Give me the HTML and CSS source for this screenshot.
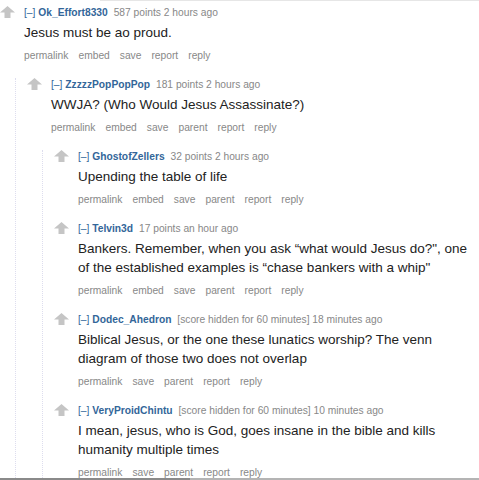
FILE: index.html
```html
<!DOCTYPE html>
<html>
<head>
<meta charset="utf-8">
<link rel="stylesheet" href="styles.css">
</head>
<body>
<div class="topline"></div>
<div class="page">
  <div class="comment">
    <div class="midcol"><svg class="arrow" viewBox="0 0 15 12"><path d="M7.5 0 L15 6.5 L10.5 6.5 L10.5 12 L4.5 12 L4.5 6.5 L0 6.5 Z"/></svg></div>
    <div class="entry">
      <p class="tagline"><a class="expand">[–]</a> <a class="author">Ok_Effort8330</a> <span class="score">587 points 2 hours ago</span></p>
      <p class="md">Jesus must be ao proud.</p>
      <ul class="buttons"><li>permalink</li><li>embed</li><li>save</li><li>report</li><li>reply</li></ul>
    </div>
  </div>
  <div class="child">
    <div class="comment">
      <div class="midcol"><svg class="arrow" viewBox="0 0 15 12"><path d="M7.5 0 L15 6.5 L10.5 6.5 L10.5 12 L4.5 12 L4.5 6.5 L0 6.5 Z"/></svg></div>
      <div class="entry">
        <p class="tagline"><a class="expand">[–]</a> <a class="author">ZzzzzPopPopPop</a> <span class="score">181 points 2 hours ago</span></p>
        <p class="md">WWJA? (Who Would Jesus Assassinate?)</p>
        <ul class="buttons"><li>permalink</li><li>embed</li><li>save</li><li>parent</li><li>report</li><li>reply</li></ul>
      </div>
    </div>
    <div class="child">
      <div class="comment">
        <div class="midcol"><svg class="arrow" viewBox="0 0 15 12"><path d="M7.5 0 L15 6.5 L10.5 6.5 L10.5 12 L4.5 12 L4.5 6.5 L0 6.5 Z"/></svg></div>
        <div class="entry">
          <p class="tagline"><a class="expand">[–]</a> <a class="author">GhostofZellers</a> <span class="score">32 points 2 hours ago</span></p>
          <p class="md">Upending the table of life</p>
          <ul class="buttons"><li>permalink</li><li>embed</li><li>save</li><li>parent</li><li>report</li><li>reply</li></ul>
        </div>
      </div>
      <div class="comment">
        <div class="midcol"><svg class="arrow" viewBox="0 0 15 12"><path d="M7.5 0 L15 6.5 L10.5 6.5 L10.5 12 L4.5 12 L4.5 6.5 L0 6.5 Z"/></svg></div>
        <div class="entry">
          <p class="tagline"><a class="expand">[–]</a> <a class="author">Telvin3d</a> <span class="score">17 points an hour ago</span></p>
          <p class="md">Bankers. Remember, when you ask “what would Jesus do?", one of the established examples is “chase bankers with a whip"</p>
          <ul class="buttons"><li>permalink</li><li>embed</li><li>save</li><li>parent</li><li>report</li><li>reply</li></ul>
        </div>
      </div>
      <div class="comment">
        <div class="midcol"><svg class="arrow" viewBox="0 0 15 12"><path d="M7.5 0 L15 6.5 L10.5 6.5 L10.5 12 L4.5 12 L4.5 6.5 L0 6.5 Z"/></svg></div>
        <div class="entry">
          <p class="tagline"><a class="expand">[–]</a> <a class="author">Dodec_Ahedron</a> <span class="score">[score hidden for 60 minutes] 18 minutes ago</span></p>
          <p class="md">Biblical Jesus, or the one these lunatics worship? The venn diagram of those two does not overlap</p>
          <ul class="buttons"><li>permalink</li><li>save</li><li>parent</li><li>report</li><li>reply</li></ul>
        </div>
      </div>
      <div class="comment">
        <div class="midcol"><svg class="arrow" viewBox="0 0 15 12"><path d="M7.5 0 L15 6.5 L10.5 6.5 L10.5 12 L4.5 12 L4.5 6.5 L0 6.5 Z"/></svg></div>
        <div class="entry">
          <p class="tagline"><a class="expand">[–]</a> <a class="author">VeryProidChintu</a> <span class="score">[score hidden for 60 minutes] 10 minutes ago</span></p>
          <p class="md">I mean, jesus, who is God, goes insane in the bible and kills humanity multiple times</p>
          <ul class="buttons"><li>permalink</li><li>save</li><li>parent</li><li>report</li><li>reply</li></ul>
        </div>
      </div>
    </div>
  </div>
</div>
<div class="scrollbar"><div class="thumb"></div></div>
</body>
</html>
```

FILE: styles.css
```css
html, body {
  margin: 0;
  padding: 0;
  background: #fff;
}
body {
  font-family: "Liberation Sans", Arial, sans-serif;
  width: 479px;
  height: 480px;
  overflow: hidden;
}
.topline {
  height: 1px;
  margin-left: 100px;
  background: #e6e6e6;
}
.page {
  padding: 5px 10px 0 0;
}
.comment {
  display: flex;
  align-items: flex-start;
  margin-bottom: 15px;
}
.midcol {
  width: 24px;
  flex: none;
}
.arrow {
  display: block;
  width: 15px;
  height: 12px;
  fill: #c5c5c5;
}
.entry {
  flex: 1;
  min-width: 0;
}
.tagline {
  margin: 0;
  font-size: 10.25px;
  line-height: 14px;
  color: #888;
}
.expand {
  color: #369;
}
.author {
  color: #369;
  font-weight: bold;
  margin-right: 3px;
}
.md {
  margin: 3px 0 0;
  font-size: 13.5px;
  line-height: 19px;
  color: #222;
}
.buttons {
  list-style: none;
  margin: 7px 0 0;
  padding: 0;
  display: flex;
  gap: 10px;
  font-size: 10.25px;
  line-height: 14px;
  color: #888;
}
.child {
  margin-left: 15px;
  border-left: 1px dotted #dde;
  padding-left: 11px;
}
.scrollbar {
  position: fixed;
  left: 0;
  right: 0;
  bottom: 0;
  height: 2px;
  background: #b4b4b4;
}
.thumb {
  width: 190px;
  height: 2px;
  background: #8a8a8a;
}
```
